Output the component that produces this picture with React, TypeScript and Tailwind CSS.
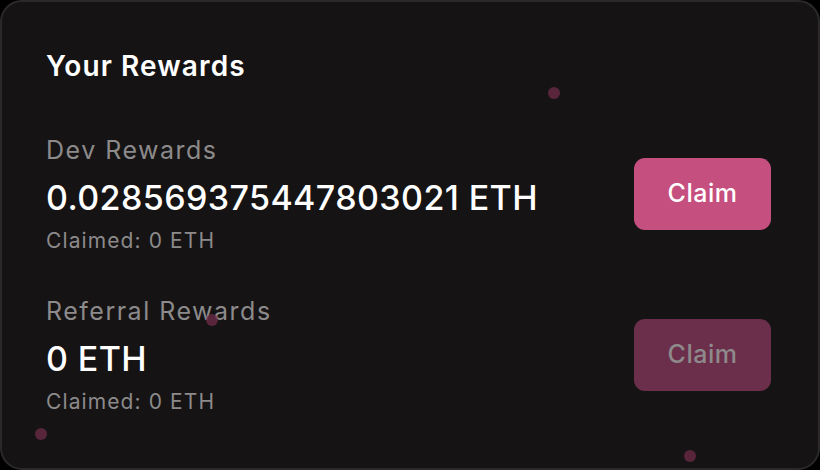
const dots = [
  { left: 546, top: 85 },
  { left: 204, top: 312 },
  { left: 33, top: 426 },
  { left: 682, top: 448 },
];

function RewardRow({ label, amount, claimed, active }: { label: string; amount: string; claimed: string; active: boolean }) {
  return (
    <div className="flex items-center justify-between">
      <div className="flex flex-col">
        <span className="text-[25px] leading-[28px] tracking-[1.5px] text-[#8c8a8b]">{label}</span>
        <span className="text-[34px] leading-[44px] tracking-[0.4px] font-medium text-white mt-[12px]">{amount}</span>
        <span className="text-[21px] leading-[28px] tracking-[1.1px] text-[#8c8a8b] mt-[7px]">{claimed}</span>
      </div>
      <button
        className={
          active
            ? "w-[137px] h-[72px] mb-[4px] rounded-[11px] bg-[#c55080] text-white text-[25px] tracking-[0.5px] font-medium"
            : "w-[137px] h-[72px] mb-[4px] rounded-[11px] bg-[#6c2f4b] text-[#8e8a8c] text-[25px] tracking-[0.5px] font-medium"
        }
      >
        Claim
      </button>
    </div>
  );
}

export default function App() {
  return (
    <div className="w-[820px] h-[470px] bg-black" style={{ fontFamily: "Inter, 'Noto Sans', sans-serif" }}>
      <div className="relative w-full h-full rounded-[22px] border-2 border-[#2b292a] bg-[#151314] pl-[44px] pr-[47px] pt-[44px] overflow-hidden">
        <h1 className="text-[28px] leading-[40px] tracking-[1.1px] font-semibold text-white">Your Rewards</h1>
        <div className="mt-[50px] flex flex-col gap-[42px]">
          <RewardRow label="Dev Rewards" amount="0.028569375447803021 ETH" claimed="Claimed: 0 ETH" active />
          <RewardRow label="Referral Rewards" amount="0 ETH" claimed="Claimed: 0 ETH" active={false} />
        </div>
        {dots.map((d, i) => (
          <span
            key={i}
            className="absolute w-[12px] h-[12px] rounded-full bg-[#6a2a45]/80"
            style={{ left: d.left, top: d.top }}
          />
        ))}
      </div>
    </div>
  );
}
